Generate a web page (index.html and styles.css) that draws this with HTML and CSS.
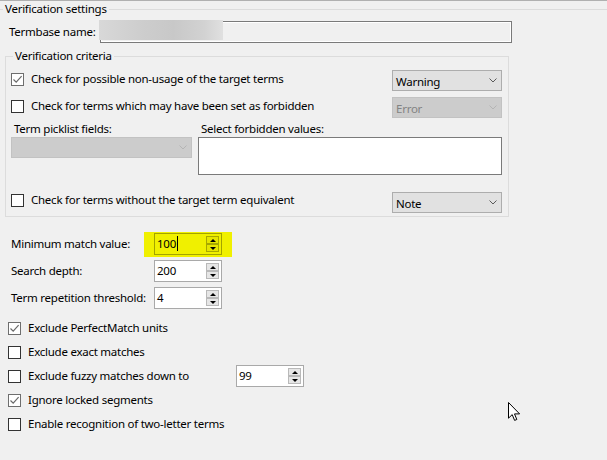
FILE: index.html
```html
<!DOCTYPE html>
<html>
<head>
<meta charset="utf-8">
<link rel="stylesheet" href="styles.css">
</head>
<body>
<div class="topline"></div>
<fieldset class="group outer">
  <legend>Verification settings</legend>
  <div class="termbase">
    <span class="tb-label">Termbase name:</span>
    <div class="textbox"><div class="redact"></div></div>
  </div>

  <fieldset class="group criteria">
    <legend>Verification criteria</legend>
    <div class="crit-row r1">
      <label class="check">
        <span class="box checked"><svg width="11" height="11" viewBox="0 0 11 11"><path d="M1.5 5.5 L4.2 8.2 L9.6 2.2" fill="none" stroke="#6a6a6a" stroke-width="1.2"/></svg></span>
        <span>Check for possible non-usage of the target terms</span>
      </label>
      <div class="combo">Warning<svg class="chev" width="8" height="5" viewBox="0 0 8 5"><path d="M0.5 0.5 L4 4 L7.5 0.5" fill="none" stroke="#5a5a5a" stroke-width="1"/></svg></div>
    </div>
    <div class="crit-row r2">
      <label class="check">
        <span class="box"></span>
        <span>Check for terms which may have been set as forbidden</span>
      </label>
      <div class="combo disabled">Error<svg class="chev" width="8" height="5" viewBox="0 0 8 5"><path d="M0.5 0.5 L4 4 L7.5 0.5" fill="none" stroke="#b4b4b4" stroke-width="1"/></svg></div>
    </div>
    <div class="pair labels">
      <span>Term picklist fields:</span>
      <span>Select forbidden values:</span>
    </div>
    <div class="pair fields">
      <div class="combo disabled wide"><svg class="chev" width="8" height="5" viewBox="0 0 8 5"><path d="M0.5 0.5 L4 4 L7.5 0.5" fill="none" stroke="#b4b4b4" stroke-width="1"/></svg></div>
      <div class="textarea"></div>
    </div>
    <div class="crit-row r3">
      <label class="check">
        <span class="box"></span>
        <span>Check for terms without the target term equivalent</span>
      </label>
      <div class="combo">Note<svg class="chev" width="8" height="5" viewBox="0 0 8 5"><path d="M0.5 0.5 L4 4 L7.5 0.5" fill="none" stroke="#5a5a5a" stroke-width="1"/></svg></div>
    </div>
  </fieldset>

  <div class="spins">
    <span>Minimum match value:</span>
    <div class="hl">
      <div class="spin marked"><span class="val">100<span class="caret"></span></span><div class="btns"><span class="sb up"></span><span class="sb dn"></span></div></div>
    </div>
    <span>Search depth:</span>
    <div class="spin"><span class="val">200</span><div class="btns"><span class="sb up"></span><span class="sb dn"></span></div></div>
    <span>Term repetition threshold:</span>
    <div class="spin"><span class="val">4</span><div class="btns"><span class="sb up"></span><span class="sb dn"></span></div></div>
  </div>

  <div class="opts">
    <div class="opt">
      <label class="check"><span class="box checked"><svg width="11" height="11" viewBox="0 0 11 11"><path d="M1.5 5.5 L4.2 8.2 L9.6 2.2" fill="none" stroke="#6a6a6a" stroke-width="1.2"/></svg></span><span>Exclude PerfectMatch units</span></label>
    </div>
    <div class="opt">
      <label class="check"><span class="box"></span><span>Exclude exact matches</span></label>
    </div>
    <div class="opt">
      <label class="check fuzzy"><span class="box"></span><span>Exclude fuzzy matches down to</span></label>
      <div class="spin"><span class="val">99</span><div class="btns"><span class="sb up"></span><span class="sb dn"></span></div></div>
    </div>
    <div class="opt">
      <label class="check"><span class="box checked"><svg width="11" height="11" viewBox="0 0 11 11"><path d="M1.5 5.5 L4.2 8.2 L9.6 2.2" fill="none" stroke="#6a6a6a" stroke-width="1.2"/></svg></span><span>Ignore locked segments</span></label>
    </div>
    <div class="opt">
      <label class="check"><span class="box"></span><span>Enable recognition of two-letter terms</span></label>
    </div>
  </div>
</fieldset>

<svg class="cursor" width="13" height="20" viewBox="0 0 13 20"><path d="M0.5 0.5 V16.2 L4.2 12.6 L6.6 18.4 L8.8 17.5 L6.5 11.9 H11.6 Z" fill="#fff" stroke="#000" stroke-width="1" stroke-linejoin="miter"/></svg>
</body>
</html>
```

FILE: styles.css
```css
* { box-sizing: border-box; }
html, body { margin: 0; padding: 0; }
body {
  width: 607px;
  height: 460px;
  overflow: hidden;
  position: relative;
  background: #f0f0f0;
  font-family: "Noto Sans", "Open Sans", sans-serif;
  font-size: 11.5px;
  letter-spacing: -0.25px;
  line-height: 16px;
  color: #000;
}
.topline { height: 1px; background: #b0b0b0; }

fieldset.group {
  border: 1px solid #dcdcdc;
  margin: 0;
  padding: 0;
  min-width: 0;
}
fieldset.group > legend {
  padding: 0 2px;
  height: 16px;
  line-height: 16px;
}
fieldset.outer {
  margin-left: -4px;
  width: 616px;
  height: 480px;
}
fieldset.outer > legend { margin-left: 6px; }

.termbase {
  display: flex;
  align-items: center;
  margin-top: 4px;
  padding-left: 12px;
  height: 22px;
}
.tb-label { width: 91px; white-space: nowrap; }
.textbox {
  width: 412px;
  height: 22px;
  border: 1px solid #7a7a7a;
  box-shadow: inset 0 0 0 1px #fff;
  background: #f0f0f0;
  position: relative;
}
.redact {
  position: absolute;
  left: -2px;
  top: -2px;
  width: 124px;
  height: 20px;
  background: linear-gradient(to right, #d8d8d8, #cdcdcd 35%, #c8c8c8 60%, #d2d2d2 85%, #e0e0e0);
}

fieldset.criteria {
  margin: 5px 0 0 8px;
  width: 504px;
  padding: 0 6px 3px 5px;
}
fieldset.criteria > legend { margin-left: 2px; }

.crit-row {
  display: flex;
  justify-content: space-between;
  align-items: flex-start;
}
.r1 { margin-top: 6px; }
.r2 { margin-top: 6px; }
.r3 { margin-top: 17px; }
.crit-row .check { margin-top: 1px; }
.r3 .check { margin-top: 0; }

.check {
  display: flex;
  align-items: center;
  gap: 7px;
  white-space: nowrap;
}
.box {
  width: 13px;
  height: 13px;
  border: 1px solid #333;
  background: #fff;
  display: flex;
  align-items: center;
  justify-content: center;
  flex: none;
}
.box.checked { border-color: #6e6e6e; }

.combo {
  width: 110px;
  height: 21px;
  border: 1px solid #adadad;
  background: #e1e1e1;
  padding: 1px 0 0 3px;
  line-height: 17px;
  display: flex;
  justify-content: space-between;
  align-items: center;
}
.combo .chev { margin-right: 4px; margin-top: -1px; }
.combo.disabled {
  background: #cccccc;
  border-color: #c2c2c2;
  color: #838383;
}
.combo.wide { width: 181px; justify-content: flex-end; }

.pair {
  display: grid;
  grid-template-columns: 181px 304px;
  column-gap: 6px;
}
.labels { margin-top: 3px; }
.labels span { padding-left: 3px; }
.textarea {
  height: 38px;
  background: #fff;
  border: 1px solid #7a7a7a;
}

.spins {
  display: grid;
  grid-template-columns: 143px 68px;
  row-gap: 5px;
  align-items: center;
  margin-top: 16px;
  padding-left: 14px;
}
.spins > span { white-space: nowrap; }
.hl {
  background: #f0f000;
  padding: 1px 10px 2px 10px;
  margin: -1px -10px -2px -10px;
}
.spin {
  width: 68px;
  height: 22px;
  border: 1px solid #a9a9a9;
  background: #fff;
  display: flex;
  justify-content: space-between;
  padding: 2px;
}
.val {
  line-height: 16px;
  display: flex;
  align-items: center;
  margin-top: -1px;
}
.caret {
  width: 1px;
  height: 15px;
  background: #000;
  margin-left: 1px;
}
.btns {
  width: 13px;
  display: flex;
  flex-direction: column;
}
.sb {
  flex: 1;
  border: 1px solid #b9b9b9;
  background: #e6e6e6;
  display: flex;
  align-items: center;
  justify-content: center;
}
.sb.up::before {
  content: "";
  border-left: 3px solid transparent;
  border-right: 3px solid transparent;
  border-bottom: 3px solid #000;
}
.sb.dn::before {
  content: "";
  border-left: 3px solid transparent;
  border-right: 3px solid transparent;
  border-top: 3px solid #000;
}
.spin.marked { background: transparent; border-color: #a3a300; }
.spin.marked .sb { background: #e6e600; border-color: #a8a800; }

.opts {
  margin-top: 7px;
  padding-left: 11px;
}
.opt {
  height: 24px;
  display: flex;
  align-items: center;
}
.check.fuzzy { width: 228px; }

.cursor {
  position: absolute;
  left: 508px;
  top: 402px;
}
```
